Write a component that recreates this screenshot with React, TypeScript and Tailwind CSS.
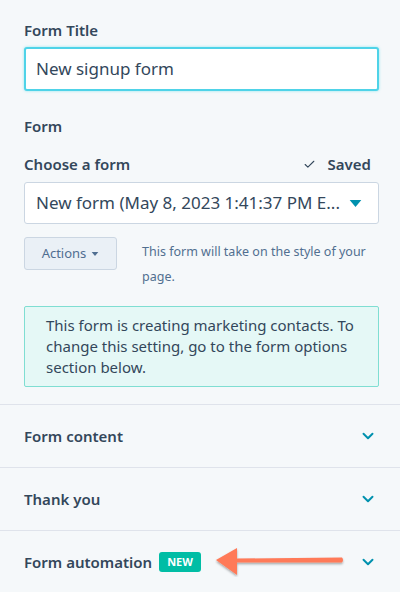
import { ChevronDown, Check } from "lucide-react";

const font = { fontFamily: '"Noto Sans", "Open Sans", Arial, sans-serif' };

function Caret({ className }: { className: string }) {
  return (
    <svg viewBox="0 0 10 6" className={className}>
      <path d="M0 0h10L5 6z" fill="currentColor" />
    </svg>
  );
}

function Section({ title, badge }: { title: string; badge?: boolean }) {
  return (
    <div className="flex h-[63px] items-center border-t border-[#dfe3eb] pl-6 pr-[23px]">
      <span className="text-[15px] font-semibold text-[#33475b]">{title}</span>
      {badge && (
        <>
          <span className="ml-[7px] rounded-[3px] bg-[#00bda5] px-[8px] py-[2px] text-[11px] font-bold leading-[16px] text-white">
            NEW
          </span>
          <svg viewBox="0 0 134 30" className="ml-[14px] h-[30px] w-[134px] shrink-0">
            <defs>
              <filter id="sh" x="-10%" y="-30%" width="120%" height="160%">
                <feDropShadow dx="0" dy="1.5" stdDeviation="1.2" floodColor="#000" floodOpacity="0.35" />
              </filter>
            </defs>
            <g filter="url(#sh)">
              <path d="M21 11.5 L127 10.5 Q129 13 127 15.5 L21 15.5z" fill="#ff7a59" />
              <path d="M1 13 L22 1 L22 28z" fill="#ff7a59" />
            </g>
          </svg>
        </>
      )}
      <ChevronDown className="ml-auto h-[18px] w-[18px] text-[#0091ae]" strokeWidth={2.6} />
    </div>
  );
}

export default function App() {
  return (
    <div className="min-h-screen w-[400px] bg-[#f5f8fa] pt-[20px] text-[#33475b]" style={font}>
      <div className="px-6 pr-[21px]">
        <label className="block text-[15px] font-semibold leading-[20px]">Form Title</label>
        <div className="mt-[7px] flex h-[44px] items-center rounded-[3px] border-2 border-[#4fd3e8] bg-white px-[10px] text-[17px] shadow-[0_0_3px_rgba(0,208,228,0.4)]">
          New signup form
        </div>

        <div className="mt-[25px] text-[15px] font-semibold leading-[20px]">Form</div>

        <div className="mt-[18px] flex items-center">
          <span className="text-[15px] font-semibold leading-[20px]">Choose a form</span>
          <Check className="ml-auto h-[13px] w-[13px] text-[#33475b]" strokeWidth={2} />
          <span className="ml-[12px] mr-[8px] text-[15px] font-semibold leading-[20px]">Saved</span>
        </div>

        <div className="mt-[8px] flex h-[42px] items-center rounded-[3px] border border-[#cbd6e2] bg-white pl-[11px] pr-[16px] text-[17px]">
          <span className="truncate">New form (May 8, 2023 1:41:37 PM E...</span>
          <Caret className="ml-auto h-[7px] w-[13px] shrink-0 text-[#0091ae]" />
        </div>

        <div className="mt-[13px] flex items-start">
          <button className="flex h-[33px] w-[93px] shrink-0 items-center justify-center gap-[5px] rounded-[3px] border border-[#cbd6e2] bg-[#eaf0f6] text-[13px] text-[#506e91]">
            Actions
            <Caret className="h-[4px] w-[8px]" />
          </button>
          <p className="ml-[25px] mt-[2px] text-[12.5px] leading-[25px] text-[#516f90]">
            This form will take on the style of your page.
          </p>
        </div>

        <div className="mt-[17px] rounded-[2px] border border-[#7fded2] bg-[#e5f8f6] py-[8px] pl-[21px] pr-[14px] text-[15px] leading-[21px]">
          This form is creating marketing contacts. To change this setting, go to the form options section below.
        </div>
      </div>

      <div className="mt-[17px]">
        <Section title="Form content" />
        <Section title="Thank you" />
        <Section title="Form automation" badge />
      </div>
    </div>
  );
}
